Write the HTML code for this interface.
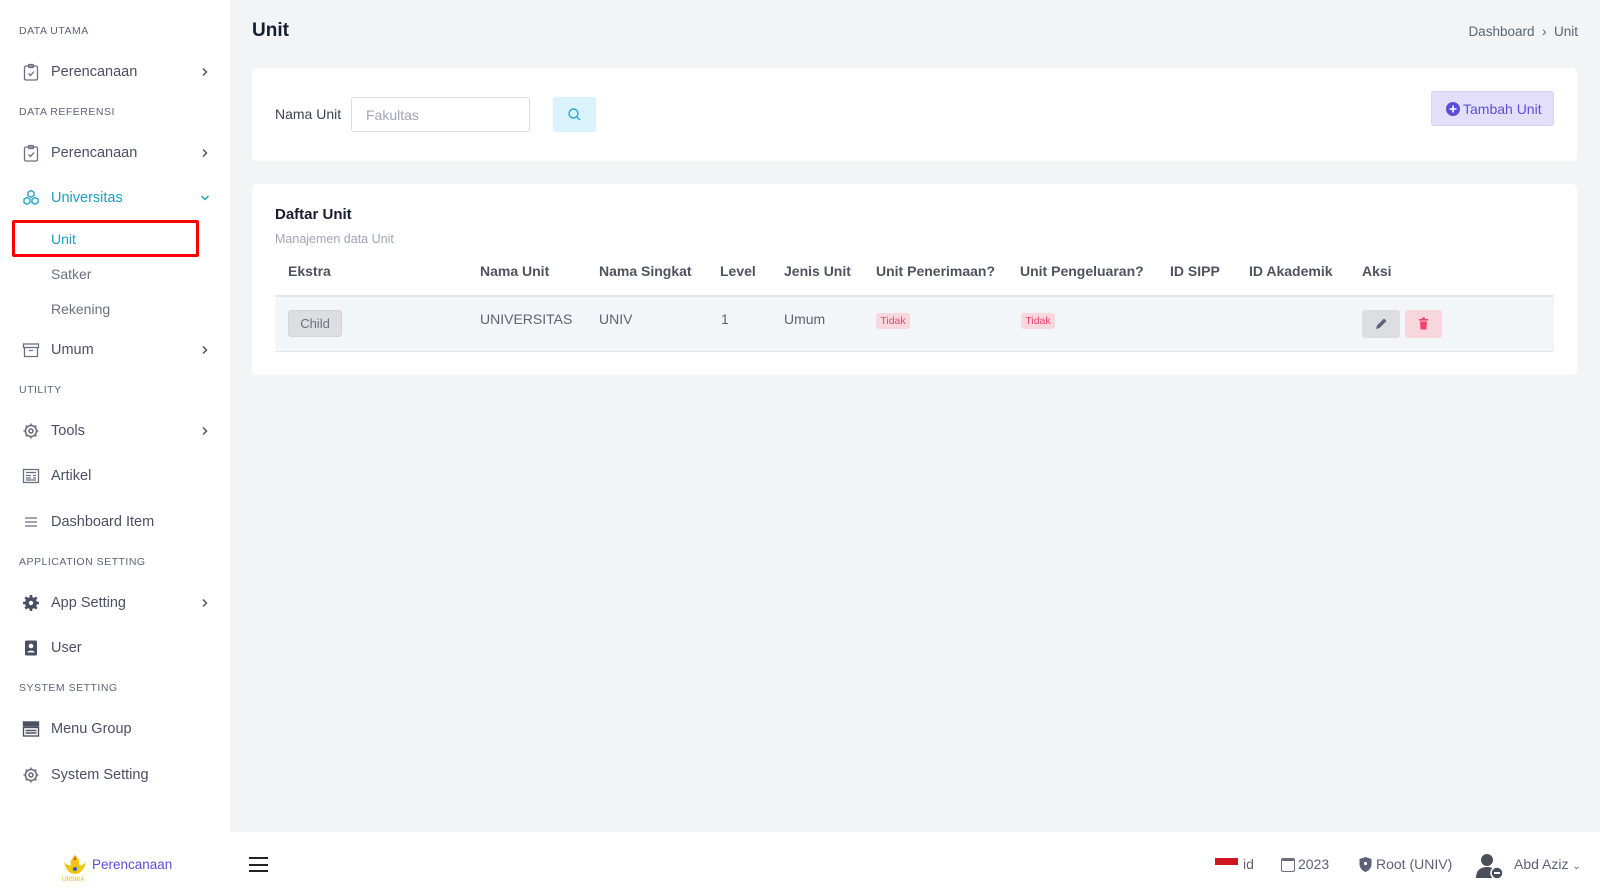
<!DOCTYPE html>
<html><head><meta charset="utf-8"><style>
*{box-sizing:border-box;margin:0;padding:0}
body{width:1600px;height:895px;overflow:hidden;background:#f3f4f6;font-family:"Liberation Sans",sans-serif;color:#3f4254;position:relative}
.abs{position:absolute}
.side{left:0;top:0;width:230px;height:832px;background:#fff}
.sec{position:absolute;left:19px;font-size:10.5px;letter-spacing:.5px;color:#5e6278;transform:translateY(-50%)}
.item{position:absolute;left:22px;width:190px;font-size:14.5px;color:#4b4f63;transform:translateY(-50%);display:flex;align-items:center;height:22px}
.item svg{width:18px;height:18px;margin-right:11px;flex:none}
.item .t{flex:1}
.item svg.ch{width:10px;height:10px;margin:0 2px 0 0}
.sub{position:absolute;left:51px;font-size:14px;color:#6b6f80;transform:translateY(-50%)}
.card{background:#fff;border-radius:5px;position:absolute;left:252px;width:1325px}
.th{position:absolute;top:263px;font-size:14px;font-weight:bold;color:#50525e}
.td{position:absolute;top:311px;font-size:14px;color:#5e6170}
.badge{position:absolute;top:313px;height:16px;width:34px;background:#f8d7de;color:#f1416c;font-size:10.5px;border-radius:3px;text-align:center;line-height:16px}
.bot{left:0;top:832px;width:1600px;height:63px;background:#fff}
.bt{position:absolute;top:856px;font-size:14px;color:#5e6278}
</style></head><body>
<div class="abs side"></div>
<div class="sec" style="top:31px">DATA UTAMA</div>
<div class="item" style="top:72px"><svg viewBox="0 0 18 18" fill="none" stroke="#6b6f80" stroke-width="1.3"><rect x="2.5" y="3" width="13" height="14" rx="1.5"/><rect x="6.5" y="1.5" width="5" height="3" rx="1"/><path d="M6.5 10.5l2 2 3.5-4"/></svg><span class="t">Perencanaan</span><svg class="ch" viewBox="0 0 10 10" fill="none" stroke="#555" stroke-width="1.5"><path d="M3 1.5l3.5 3.5L3 8.5"/></svg></div>
<div class="sec" style="top:112px">DATA REFERENSI</div>
<div class="item" style="top:153px"><svg viewBox="0 0 18 18" fill="none" stroke="#6b6f80" stroke-width="1.3"><rect x="2.5" y="3" width="13" height="14" rx="1.5"/><rect x="6.5" y="1.5" width="5" height="3" rx="1"/><path d="M6.5 10.5l2 2 3.5-4"/></svg><span class="t">Perencanaan</span><svg class="ch" viewBox="0 0 10 10" fill="none" stroke="#555" stroke-width="1.5"><path d="M3 1.5l3.5 3.5L3 8.5"/></svg></div>
<div class="item" style="top:198px;color:#1ba0c2"><svg viewBox="0 0 18 18" fill="none" stroke="#1ba0c2" stroke-width="1.3"><path d="M9 1.5l3 1.7v3.4L9 8.3 6 6.6V3.2z"/><path d="M5 8.5l3 1.7v3.4L5 15.3 2 13.6v-3.4z"/><path d="M13 8.5l3 1.7v3.4l-3 1.7-3-1.7v-3.4z"/></svg><span class="t">Universitas</span><svg class="ch" viewBox="0 0 10 10" fill="none" stroke="#1ba0c2" stroke-width="1.5"><path d="M1.5 3l3.5 3.5L8.5 3"/></svg></div>
<div class="abs" style="left:12px;top:220px;width:187px;height:37px;border:3px solid #f00;border-radius:2px"></div>
<div class="sub" style="top:239px;color:#1ba0c2">Unit</div>
<div class="sub" style="top:274px">Satker</div>
<div class="sub" style="top:309px">Rekening</div>
<div class="item" style="top:350px"><svg viewBox="0 0 18 18" fill="none" stroke="#6b6f80" stroke-width="1.3"><rect x="1.5" y="3" width="15" height="3.5"/><path d="M2.5 6.5v9h13v-9M7 9.5h4"/></svg><span class="t">Umum</span><svg class="ch" viewBox="0 0 10 10" fill="none" stroke="#555" stroke-width="1.5"><path d="M3 1.5l3.5 3.5L3 8.5"/></svg></div>
<div class="sec" style="top:390px">UTILITY</div>
<div class="item" style="top:431px"><svg viewBox="0 0 18 18" fill="none" stroke="#6b6f80" stroke-width="1.6"><circle cx="9" cy="9" r="5.5"/><circle cx="9" cy="9" r="2"/><path d="M9 1.5v2M9 14.5v2M1.5 9h2M14.5 9h2M3.7 3.7l1.4 1.4M12.9 12.9l1.4 1.4M3.7 14.3l1.4-1.4M12.9 5.1l1.4-1.4"/></svg><span class="t">Tools</span><svg class="ch" viewBox="0 0 10 10" fill="none" stroke="#555" stroke-width="1.5"><path d="M3 1.5l3.5 3.5L3 8.5"/></svg></div>
<div class="item" style="top:476px"><svg viewBox="0 0 18 18" fill="none" stroke="#6b6f80" stroke-width="1.3"><rect x="1.5" y="2.5" width="15" height="13"/><path d="M4 5.5h10M4 8.5h5M4 11h5M11 8.5h3M11 11h3M4 13h10"/></svg><span class="t">Artikel</span></div>
<div class="item" style="top:522px"><svg viewBox="0 0 18 18" fill="none" stroke="#6b6f80" stroke-width="1.2"><path d="M3 5h12M3 9h12M3 13h12"/></svg><span class="t">Dashboard Item</span></div>
<div class="sec" style="top:562px">APPLICATION SETTING</div>
<div class="item" style="top:603px"><svg viewBox="0 0 18 18"><circle cx="9" cy="9" r="6" fill="#4b4f63"/><path d="M9 1v3M9 14v3M1 9h3M14 9h3M3.3 3.3l2.1 2.1M12.6 12.6l2.1 2.1M3.3 14.7l2.1-2.1M12.6 5.4l2.1-2.1" stroke="#4b4f63" stroke-width="2.6"/><circle cx="9" cy="9" r="2.2" fill="#fff"/></svg><span class="t">App Setting</span><svg class="ch" viewBox="0 0 10 10" fill="none" stroke="#555" stroke-width="1.5"><path d="M3 1.5l3.5 3.5L3 8.5"/></svg></div>
<div class="item" style="top:648px"><svg viewBox="0 0 18 18"><rect x="3" y="1.5" width="12" height="15" rx="1.5" fill="#4b4f63"/><circle cx="9" cy="7" r="2.3" fill="#fff"/><path d="M5.5 13.5c0-2.5 7-2.5 7 0z" fill="#fff"/></svg><span class="t">User</span></div>
<div class="sec" style="top:688px">SYSTEM SETTING</div>
<div class="item" style="top:729px"><svg viewBox="0 0 18 18" fill="none" stroke="#4b4f63" stroke-width="1.4"><rect x="1.5" y="2" width="15" height="4" fill="#4b4f63"/><rect x="1.5" y="7.5" width="15" height="8.5"/><path d="M3.5 10.5h11M3.5 13h11"/></svg><span class="t">Menu Group</span></div>
<div class="item" style="top:775px"><svg viewBox="0 0 18 18" fill="none" stroke="#6b6f80" stroke-width="1.6"><circle cx="9" cy="9" r="5.5"/><circle cx="9" cy="9" r="2"/><path d="M9 1.5v2M9 14.5v2M1.5 9h2M14.5 9h2M3.7 3.7l1.4 1.4M12.9 12.9l1.4 1.4M3.7 14.3l1.4-1.4M12.9 5.1l1.4-1.4"/></svg><span class="t">System Setting</span></div>

<div class="abs" style="left:252px;top:20px;font-size:19px;font-weight:bold;color:#181c32">Unit</div>
<div class="abs" style="right:22px;top:24px;font-size:13.5px;color:#5e6278">Dashboard &nbsp;›&nbsp; Unit</div>

<div class="card" style="top:68px;height:93px"></div>
<div class="abs" style="left:275px;top:106px;font-size:14px;color:#3f4254">Nama Unit</div>
<div class="abs" style="left:351px;top:97px;width:179px;height:35px;border:1px solid #dcdde3;border-radius:3px;background:#fff;font-size:14px;color:#a1a5b7;padding:9px 14px">Fakultas</div>
<div class="abs" style="left:553px;top:97px;width:43px;height:35px;background:#d9f2fb;border-radius:3px"><svg width="43" height="35" viewBox="0 0 43 35" fill="none" stroke="#2ba6d6" stroke-width="1.4"><circle cx="20.5" cy="16.5" r="4.5"/><path d="M24 20l3 3"/></svg></div>
<div class="abs" style="left:1431px;top:91px;width:123px;height:35px;background:#e3dffb;border:1px solid #d6d0f7;border-radius:3px;color:#5b4fd8;font-size:14px;display:flex;align-items:center;padding-left:14px;gap:3px"><svg width="14" height="14" viewBox="0 0 14 14"><circle cx="7" cy="7" r="7" fill="#5b4fd8"/><path d="M7 3.5v7M3.5 7h7" stroke="#fff" stroke-width="1.6"/></svg>Tambah Unit</div>

<div class="card" style="top:184px;height:191px"></div>
<div class="abs" style="left:275px;top:206px;font-size:15px;font-weight:bold;color:#181c32">Daftar Unit</div>
<div class="abs" style="left:275px;top:232px;font-size:12.5px;color:#a1a5b7">Manajemen data Unit</div>
<div class="th" style="left:288px">Ekstra</div>
<div class="th" style="left:480px">Nama Unit</div>
<div class="th" style="left:599px">Nama Singkat</div>
<div class="th" style="left:720px">Level</div>
<div class="th" style="left:784px">Jenis Unit</div>
<div class="th" style="left:876px">Unit Penerimaan?</div>
<div class="th" style="left:1020px">Unit Pengeluaran?</div>
<div class="th" style="left:1170px">ID SIPP</div>
<div class="th" style="left:1249px">ID Akademik</div>
<div class="th" style="left:1362px">Aksi</div>
<div class="abs" style="left:275px;top:295px;width:1279px;height:57px;background:#f3f6f9;border-top:2px solid #e4e6ef;border-bottom:1px solid #e4e6ef"></div>
<div class="abs" style="left:288px;top:310px;width:54px;height:27px;background:#dcdee2;border:1px solid #d2d4d8;border-radius:3px;font-size:13px;color:#6b6f80;text-align:center;line-height:25px">Child</div>
<div class="td" style="left:480px">UNIVERSITAS</div>
<div class="td" style="left:599px">UNIV</div>
<div class="td" style="left:721px">1</div>
<div class="td" style="left:784px">Umum</div>
<div class="badge" style="left:876px">Tidak</div>
<div class="badge" style="left:1021px">Tidak</div>
<div class="abs" style="left:1362px;top:310px;width:38px;height:28px;background:#dcdee2;border-radius:3px"><svg width="38" height="28" viewBox="0 0 38 28"><path d="M14 19l1-3.5 7-7 2.5 2.5-7 7z" fill="#5e6278"/></svg></div>
<div class="abs" style="left:1405px;top:310px;width:37px;height:28px;background:#f7d6de;border-radius:3px"><svg width="37" height="28" viewBox="0 0 37 28" fill="#f1416c"><rect x="14" y="9" width="9" height="1.6"/><rect x="17" y="7.5" width="3" height="1.5"/><path d="M15 11.5h7l-.6 8h-5.8z"/></svg></div>

<div class="abs bot"></div>
<div class="abs" style="left:61px;top:852px;width:28px;height:28px"><svg width="28" height="30" viewBox="0 0 28 30"><path d="M3 10c2 8 6 12 11 12s9-4 11-12c-3 3-5 4-7 3 1-3 0-6-4-10-4 4-5 7-4 10-2 1-4 0-7-3z" fill="#f1c40f"/><circle cx="14" cy="17" r="2" fill="#2b5fd9"/><path d="M14 3l1 5h-2z" fill="#e33"/><text x="1" y="29" font-size="6" fill="#e6b800" font-family="Liberation Sans">UNSIKA</text></svg></div>
<div class="bt" style="left:92px;top:857px;color:#5b4fd8;font-size:13.5px">Perencanaan</div>
<div class="abs" style="left:249px;top:857px;width:19px;height:15px;border-top:2px solid #222;border-bottom:2px solid #222"><div style="margin-top:4.5px;height:2px;background:#222"></div></div>
<div class="abs" style="left:1215px;top:858px;width:23px;height:7px;background:#d0161e"></div>
<div class="bt" style="left:1243px">id</div>
<div class="abs" style="left:1281px;top:858px;width:14px;height:14px;border:1.3px solid #6b6f80;border-top-width:3px;border-radius:2px"></div>
<div class="bt" style="left:1298px">2023</div>
<svg class="abs" style="left:1359px;top:857px" width="13" height="15" viewBox="0 0 13 15"><path d="M6.5 0l6 2v5c0 4-3 7-6 8-3-1-6-4-6-8V2z" fill="#5e6278"/><circle cx="6.5" cy="6.5" r="1.6" fill="#fff"/></svg>
<div class="bt" style="left:1376px">Root (UNIV)</div>
<svg class="abs" style="left:1475px;top:852px" width="30" height="28" viewBox="0 0 30 28"><circle cx="12" cy="8" r="6" fill="#4b4f5c"/><path d="M1 26c0-8 5-11 11-11s11 3 11 11z" fill="#4b4f5c"/><circle cx="22" cy="21" r="6" fill="#4b4f5c" stroke="#fff" stroke-width="1.5"/><rect x="19" y="20" width="6" height="2" fill="#fff"/></svg>
<div class="bt" style="left:1514px">Abd Aziz <span style="font-size:10px">⌄</span></div>
</body></html>
